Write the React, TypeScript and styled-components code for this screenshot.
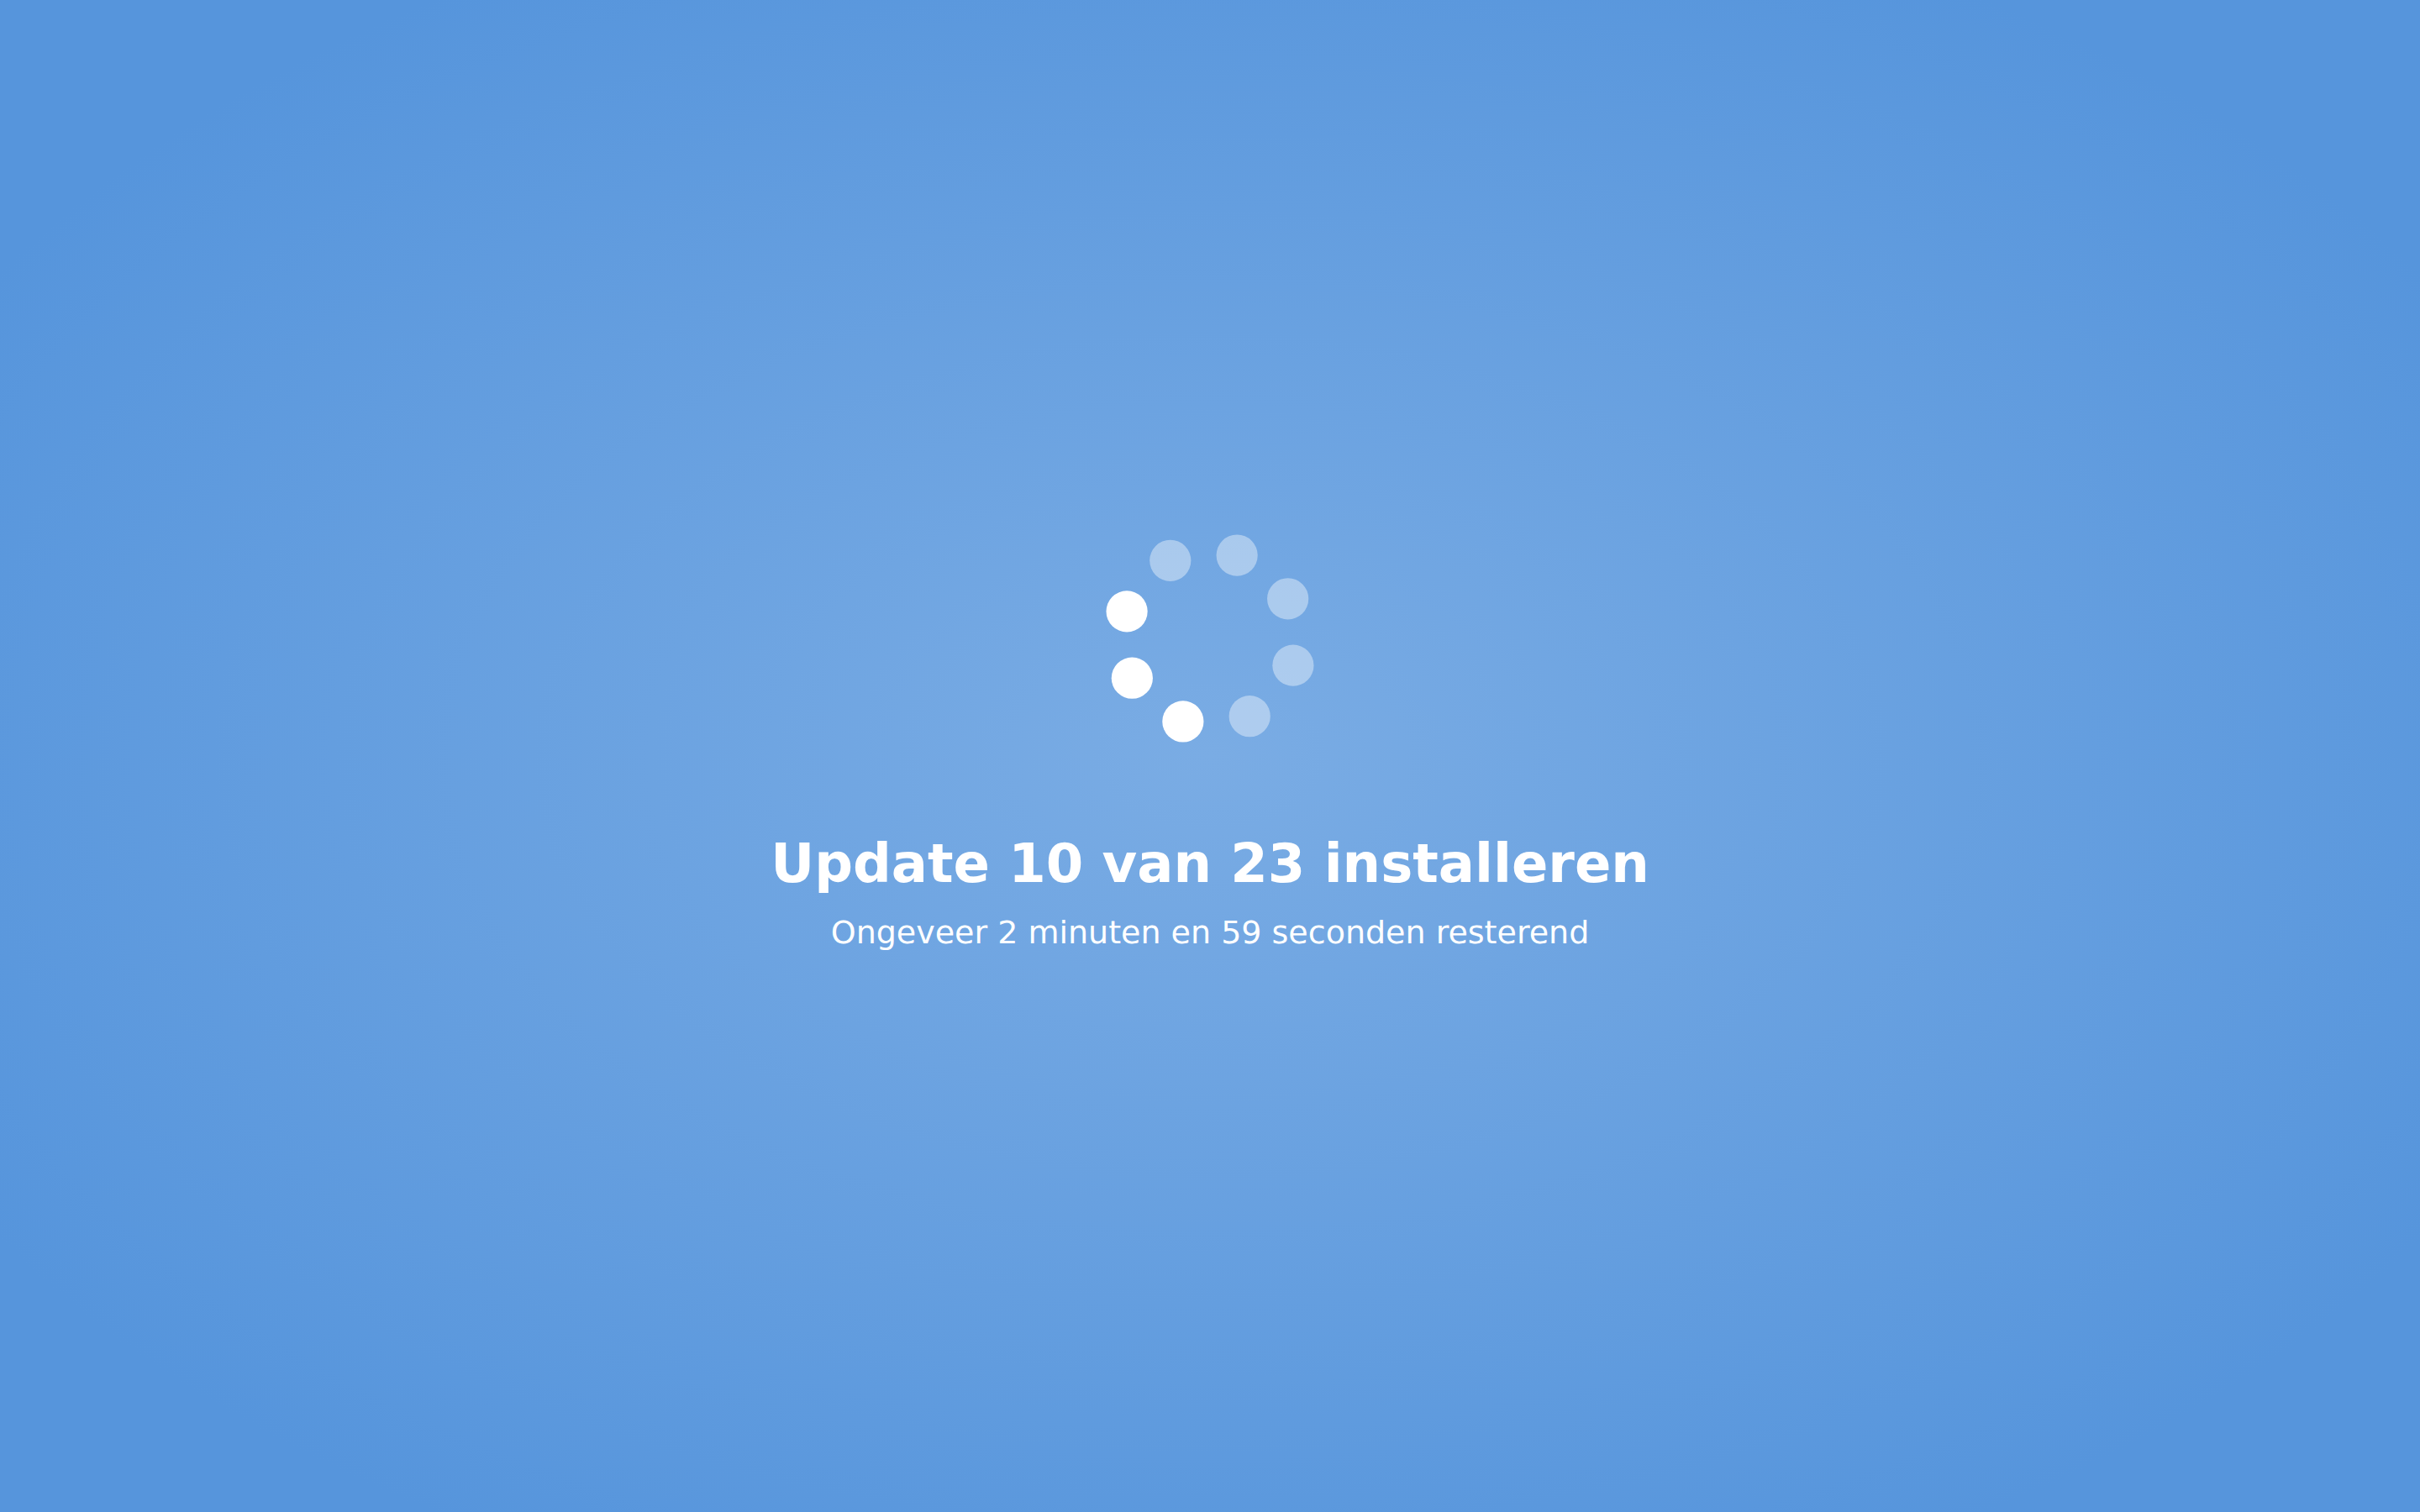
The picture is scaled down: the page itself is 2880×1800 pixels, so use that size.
import React from 'react';
import styled, { createGlobalStyle } from 'styled-components';

const GlobalStyle = createGlobalStyle`
  body {
    margin: 0;
    font-family: Verdana, 'DejaVu Sans', sans-serif;
  }
`;

const Screen = styled.main`
  box-sizing: border-box;
  min-height: 100vh;
  display: flex;
  flex-direction: column;
  align-items: center;
  justify-content: center;
  padding-bottom: 20px;
  color: #fff;
  text-align: center;
  background: radial-gradient(ellipse at center, #7aace4 0%, #5695dc 84%);
`;

const Spinner = styled.svg`
  display: block;
  width: 256px;
  height: 256px;
  margin-bottom: 96px;
`;

const Dot = styled.circle<{ $active: boolean }>`
  fill: #fff;
  fill-opacity: ${({ $active }) => ($active ? 1 : 0.4)};
`;

const Title = styled.h1`
  margin: 0;
  font-size: 64px;
  line-height: 88px;
  font-weight: 700;
`;

const Remaining = styled.p`
  margin: 0;
  font-size: 38px;
  line-height: 76px;
`;

const DOTS = 8;
const ACTIVE = [4, 5, 6];
const START_ANGLE = 18;

const dots = Array.from({ length: DOTS }, (_, i) => {
  const angle = ((START_ANGLE + (i * 360) / DOTS) * Math.PI) / 180;
  return {
    x: 128 + 104 * Math.sin(angle),
    y: 128 - 104 * Math.cos(angle),
    active: ACTIVE.includes(i),
  };
});

export default function App() {
  return (
    <>
      <GlobalStyle />
      <Screen>
        <Spinner viewBox="0 0 256 256" aria-hidden="true">
          {dots.map((dot, i) => (
            <Dot key={i} cx={dot.x} cy={dot.y} r={24.6} $active={dot.active} />
          ))}
        </Spinner>
        <Title>Update 10 van 23 installeren</Title>
        <Remaining>Ongeveer 2 minuten en 59 seconden resterend</Remaining>
      </Screen>
    </>
  );
}
